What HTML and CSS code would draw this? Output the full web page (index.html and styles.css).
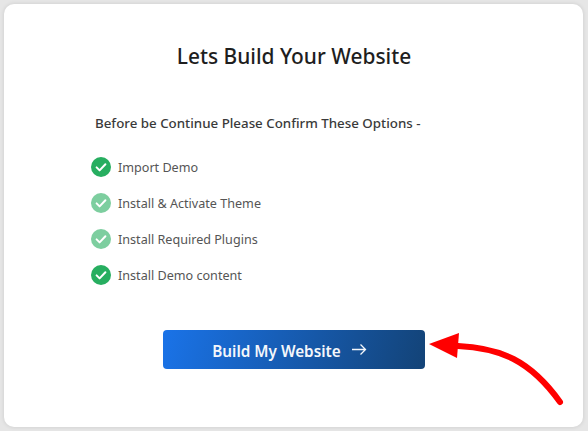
FILE: index.html
```html
<!DOCTYPE html>
<html lang="en">
<head>
<meta charset="utf-8">
<title>Lets Build Your Website</title>
<link rel="stylesheet" href="styles.css">
</head>
<body>
<main class="card">
  <h1 class="title">Lets Build Your Website</h1>
  <p class="lead">Before be Continue Please Confirm These Options -</p>
  <ul class="steps">
    <li class="step"><svg class="check" viewBox="0 0 20 20"><circle cx="10" cy="10" r="10"/><path d="M5.6 10.4l3 3 5.8-6.2"/></svg>Import Demo</li>
    <li class="step"><svg class="check check-pending" viewBox="0 0 20 20"><circle cx="10" cy="10" r="10"/><path d="M5.6 10.4l3 3 5.8-6.2"/></svg>Install &amp; Activate Theme</li>
    <li class="step"><svg class="check check-pending" viewBox="0 0 20 20"><circle cx="10" cy="10" r="10"/><path d="M5.6 10.4l3 3 5.8-6.2"/></svg>Install Required Plugins</li>
    <li class="step"><svg class="check" viewBox="0 0 20 20"><circle cx="10" cy="10" r="10"/><path d="M5.6 10.4l3 3 5.8-6.2"/></svg>Install Demo content</li>
  </ul>
  <a class="build" href="#">Build My Website
    <svg class="build-arrow" viewBox="0 0 16 12"><path d="M1 6h13.5M9.5 1l5 5-5 5"/></svg>
  </a>
</main>
<svg class="pointer" viewBox="0 0 588 431">
  <path class="pointer-line" d="M458 346C500 348 530 360 560 402"/>
  <path class="pointer-head" d="M429 344L459 333L457 358Z"/>
</svg>
</body>
</html>
```
FILE: styles.css
```css
* { box-sizing: border-box; }
html, body { margin: 0; height: 100%; }
body {
  width: 588px;
  height: 431px;
  padding: 4px 5px 4px 4px;
  background: #e6e6e6;
  font-family: "Noto Sans", "Open Sans", sans-serif;
  overflow: hidden;
  position: relative;
}
.card {
  height: 423px;
  padding: 38px 0 0 87px;
  background: #fff;
  border-radius: 10px;
  box-shadow: 0 0 4px rgba(0, 0, 0, .12);
  display: flex;
  flex-direction: column;
}
.title {
  margin: 0 0 0 -86px;
  font-size: 20.9px;
  line-height: 29px;
  font-weight: 500;
  color: #1e1e1e;
  text-align: center;
}
.lead {
  margin: 42px 0 0 4px;
  font-size: 13.33px;
  line-height: 20px;
  font-weight: 500;
  color: #3a3a3a;
}
.steps {
  list-style: none;
  margin: 24px 0 0;
  padding: 0;
  display: flex;
  flex-direction: column;
  gap: 16px;
}
.step {
  display: flex;
  align-items: center;
  gap: 7px;
  height: 20px;
  font-size: 12.6px;
  color: #555;
}
.check { width: 20px; height: 20px; flex: none; }
.check circle { fill: #27ae60; }
.check path { fill: none; stroke: #fff; stroke-width: 2; stroke-linecap: round; stroke-linejoin: round; }
.check-pending { opacity: .6; }
.build {
  align-self: flex-start;
  margin: 45px 0 0 72px;
  width: 262px;
  height: 39px;
  padding: 2px 9px 0 0;
  display: flex;
  align-items: center;
  justify-content: center;
  gap: 10px;
  border-radius: 4px;
  background: linear-gradient(105deg, #1a73e8, #134377);
  color: #f4f7fb;
  font-size: 15.3px;
  font-weight: 600;
  text-decoration: none;
}
.build-arrow { width: 16px; height: 13px; margin-top: -3px; fill: none; stroke: #f4f7fb; stroke-width: 1.3; }
.pointer { position: absolute; left: 0; top: 0; width: 588px; height: 431px; pointer-events: none; }
.pointer-line { fill: none; stroke: #f00; stroke-width: 6; stroke-linecap: round; }
.pointer-head { fill: #f00; }
```
